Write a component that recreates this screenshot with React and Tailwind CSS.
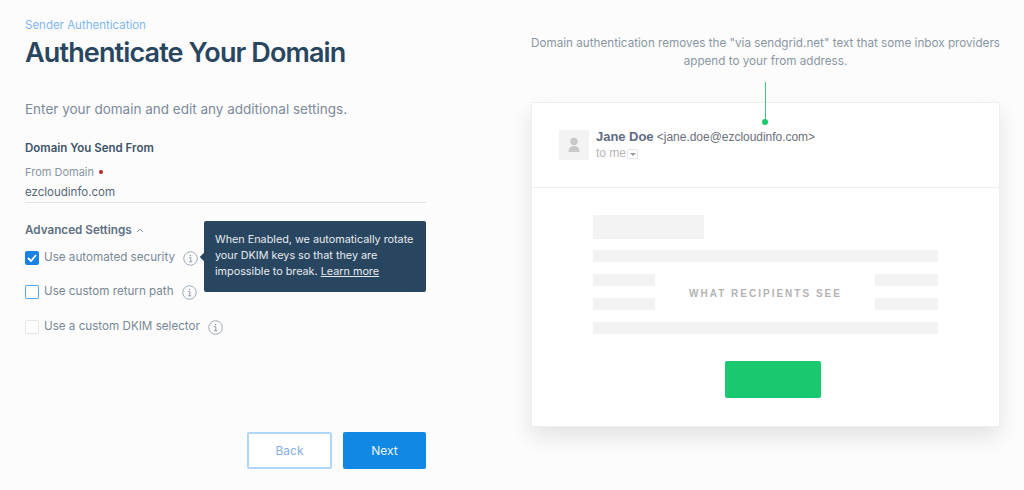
import React from 'react';

const InfoIcon = () => (
  <svg width="15" height="15" viewBox="0 0 16 16" fill="none" className="shrink-0">
    <circle cx="8" cy="8" r="7.2" stroke="#9aa5b1" strokeWidth="1" />
    <path d="M6.6 7h1.7v4.4M6.4 11.5h3.4" stroke="#8a96a3" strokeWidth="1" />
    <circle cx="8" cy="4.8" r="0.8" fill="#8a96a3" />
  </svg>
);

const OptionRow = ({ label, box, gap }) => (
  <div className={`flex items-center h-[16px] ${gap}`}>
    {box}
    <span className="ml-[5px] inline-flex items-center text-[11.65px] leading-none text-[#7a8896] whitespace-nowrap">
      {label}
      <span className="ml-[8px]"><InfoIcon /></span>
    </span>
  </div>
);

const App = () => {
  return (
    <div className="flex h-[490px] w-[1024px] overflow-hidden bg-[#fcfcfc] font-['Inter',sans-serif]">
      {/* Form column */}
      <div className="relative ml-[25px] w-[401px] shrink-0 flex flex-col">
        <p className="mt-[18px] text-[11.5px] leading-[14px] text-[#81b7f2]">Sender Authentication</p>
        <h1 className="mt-[3px] text-[27px] leading-[36px] font-semibold tracking-[-0.87px] text-[#294661] whitespace-nowrap">
          Authenticate Your Domain
        </h1>
        <p className="mt-[28px] text-[13.5px] leading-[20px] text-[#7c8a99]">Enter your domain and edit any additional settings.</p>
        <h2 className="mt-[20px] text-[11.5px] leading-[18px] font-semibold text-[#3f5368]">Domain You Send From</h2>
        <div className="mt-[7px] flex items-center text-[11px] leading-[16px] text-[#8a96a3]">
          From Domain
          <span className="ml-[5px] h-[4px] w-[4px] rounded-full bg-[#b5262b]"></span>
        </div>
        <div className="mt-[3px] pb-[1px] border-b border-[#e3e5e8] text-[11.5px] leading-[18px] text-[#566778]">ezcloudinfo.com</div>

        <div className="mt-[19px] flex items-center text-[11.7px] leading-[16px] font-semibold text-[#5f6f80]">
          Advanced Settings
          <svg width="8" height="5" viewBox="0 0 8 5" fill="none" className="ml-[4px]">
            <path d="M1 4l3-3 3 3" stroke="#8a96a3" strokeWidth="1" />
          </svg>
        </div>

        <OptionRow
          gap="mt-[12px]"
          label="Use automated security"
          box={
            <span className="flex h-[14px] w-[14px] items-center justify-center rounded-[2px] bg-[#1a82e2]">
              <svg width="10" height="8" viewBox="0 0 10 8" fill="none">
                <path d="M1 4l3 3 5-6" stroke="#fff" strokeWidth="1.8" />
              </svg>
            </span>
          }
        />
        <OptionRow
          gap="mt-[18px]"
          label="Use custom return path"
          box={<span className="h-[14px] w-[14px] rounded-[2px] border border-[#5ba4ea] bg-white"></span>}
        />
        <OptionRow
          gap="mt-[19px]"
          label="Use a custom DKIM selector"
          box={<span className="h-[14px] w-[14px] rounded-[2px] border border-[#e3e5e8] bg-white"></span>}
        />

        <div className="mt-auto mb-[21px] flex justify-end gap-[11px]">
          <button className="h-[37px] w-[85px] rounded-[2px] border-2 border-[#b2d6f6] bg-white text-[12px] text-[#84aee6]">Back</button>
          <button className="h-[37px] w-[83px] rounded-[2px] bg-[#1288e5] text-[12px] text-[#eaf4fd]">Next</button>
        </div>

        {/* Tooltip */}
        <div className="absolute left-[179px] top-[221px] h-[71px] w-[222px] rounded-[2px] bg-[#294661] pl-[11px] pr-[6px] pt-[11px] text-[10.8px] leading-[16px] text-[#e6ebf0]">
          <span className="absolute left-[-3px] top-[33px] h-[6px] w-[6px] rotate-45 bg-[#294661]"></span>
          When Enabled, we automatically rotate your DKIM keys so that they are impossible to break. <span className="underline">Learn more</span>
        </div>
      </div>

      {/* Preview column */}
      <div className="ml-[105px] w-[469px] shrink-0 flex flex-col">
        <p className="mt-[34px] text-center text-[11.7px] leading-[18px] text-[#8a96a3] whitespace-nowrap">
          Domain authentication removes the "via sendgrid.net" text that some inbox providers
          <br />
          append to your from address.
        </p>
        <div className="relative mt-[32px] h-[325px] rounded-[2px] border border-[#eeeeee] bg-white shadow-[0_10px_22px_rgba(0,0,0,0.1)]">
          {/* Pointer */}
          <span className="absolute left-[233px] top-[-21px] h-[38px] w-px bg-[#3fc47f]"></span>
          <span className="absolute left-[230px] top-[16px] h-[6px] w-[6px] rounded-full bg-[#18c96e]"></span>

          <div className="flex h-[85px] border-b border-[#ededed] pl-[27px] pt-[27px]">
            <div className="flex h-[30px] w-[30px] items-center justify-center bg-[#f3f3f3]">
              <svg width="14" height="16" viewBox="0 0 14 16" fill="#c9c9c9">
                <circle cx="7" cy="4.5" r="3.7" />
                <path d="M1.5 15c0-4 2-6 5.500-6s5.500 2 5.500 6z" />
              </svg>
            </div>
            <div className="ml-[7px] font-['Liberation_Sans',sans-serif]">
              <div className="text-[12px] leading-[14px] tracking-[-0.03px] text-[#6b6f7a] whitespace-nowrap">
                <span className="text-[13px] font-bold text-[#5f6b80]">Jane Doe</span> &lt;jane.doe@ezcloudinfo.com&gt;
              </div>
              <div className="mt-[2px] flex items-center text-[12px] leading-[14px] text-[#b5b5b5]">
                to me
                <span className="ml-[1px] mt-[2px] flex h-[10px] w-[11px] items-center justify-center rounded-[1px] border border-[#e5e5e5]">
                  <span className="border-x-[3px] border-t-[3px] border-x-transparent border-t-[#999]"></span>
                </span>
              </div>
            </div>
          </div>

          <div className="relative pl-[61px] pr-[61px] pt-[27px]">
            <div className="h-[24px] w-[111px] bg-[#f3f3f3]"></div>
            <div className="mt-[11px] h-[12px] bg-[#f3f3f3]"></div>
            <div className="mt-[12px] flex justify-between">
              <div className="h-[12px] w-[62px] bg-[#f3f3f3]"></div>
              <div className="h-[12px] w-[63px] bg-[#f3f3f3]"></div>
            </div>
            <div className="relative mt-[12px] flex justify-between">
              <div className="h-[12px] w-[62px] bg-[#f3f3f3]"></div>
              <div className="h-[12px] w-[63px] bg-[#f3f3f3]"></div>
              <span className="absolute left-0 right-0 top-[-10px] text-center font-['Liberation_Sans',sans-serif] text-[10px] font-bold leading-[12px] tracking-[2px] text-[#b3b3b3]">
                WHAT RECIPIENTS SEE
              </span>
            </div>
            <div className="mt-[12px] h-[12px] bg-[#f3f3f3]"></div>
            <div className="ml-[132px] mt-[27px] h-[37px] w-[96px] rounded-[2px] bg-[#1ac96f]"></div>
          </div>
        </div>
      </div>
    </div>
  );
};

export default App;
